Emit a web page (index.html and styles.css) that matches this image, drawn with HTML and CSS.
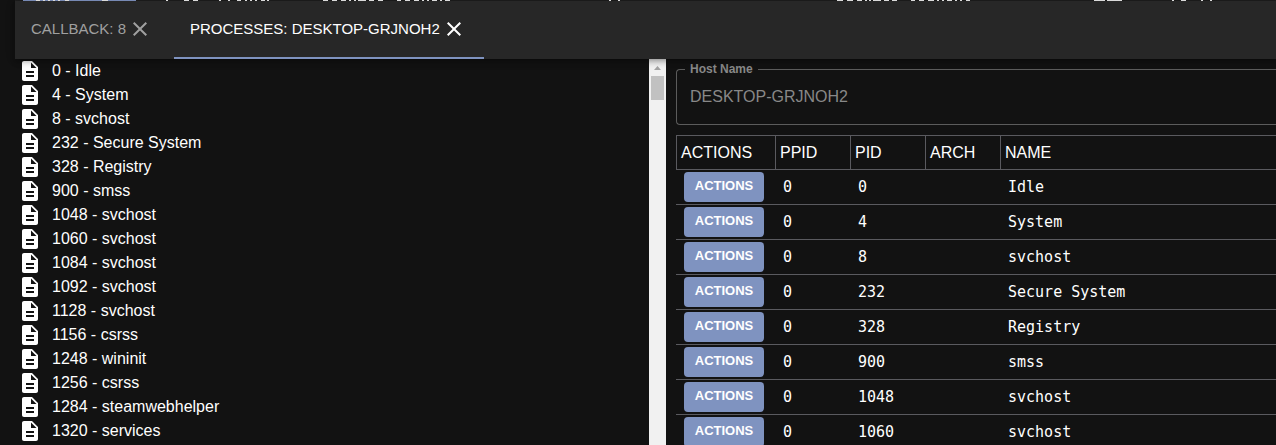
FILE: index.html
```html
<!DOCTYPE html>
<html lang="en">
<head>
<meta charset="utf-8">
<title>Processes: DESKTOP-GRJNOH2</title>
<meta name="viewport" content="width=device-width, initial-scale=1">
<link rel="stylesheet" href="styles.css">
</head>
<body>
<svg class="sprite" aria-hidden="true">
  <symbol id="i-file" viewBox="0 0 24 24"><path d="M14 2H6c-1.1 0-1.99.9-1.99 2L4 20c0 1.1.89 2 1.99 2H18c1.1 0 2-.9 2-2V8l-6-6zm2 16H8v-2h8v2zm0-4H8v-2h8v2zm-3-5V3.5L18.5 9H13z"/></symbol>
  <symbol id="i-close" viewBox="0 0 24 24"><path d="M19 6.41 17.59 5 12 10.59 6.41 5 5 6.41 10.59 12 5 17.59 6.41 19 12 13.41 17.59 19 19 17.59 13.41 12z"/></symbol>
</svg>
<div class="app">
  <div class="upper" aria-hidden="true">
    <svg class="upper-edge" width="1261" height="1" shape-rendering="crispEdges">
      <path stroke="#7f93c0" d="M8 .5h113"/>
      <path stroke="#e8e8e8" d="M21 .5h4m3 0h2m3 0h2m3 0h2m3 0h2m5 0h4m33 0h6m58 0h2m16 0h5m4 0h5m21 0h2m7 0h2m7 0h4m4 0h2m3 0h2m3 0h2m4 0h4m2 0h2M308 .5h5m4 0h5m4 0h5m3 0h2m3 0h2m2 0h8m3 0h5m4 0h5m14 0h4m4 0h5m4 0h5m3 0h2m3 0h2m3 0h5m3 0h2m3 0h5M594 .5h2m7 0h2M822 .5h6m4 0h6m4 0h5m3 0h2m2 0h2m2 0h8m3 0h5m3 0h5m14 0h4m4 0h5m4 0h6m3 0h2m3 0h2m3 0h5m3 0h2m3 0h2m4 0h4M1079 .5h11m2 0h15m50 0h2m7 0h5m15 0h2m7 0h2"/>
    </svg>
  </div>
  <header class="tabs" role="tablist">
    <div class="tab">
      <button class="tab-label" type="button" role="tab" aria-selected="false">CALLBACK: 8</button>
      <button class="tab-close" type="button" aria-label="Close callback 8"><svg class="icon"><use href="#i-close"/></svg></button>
    </div>
    <div class="tab tab-active">
      <button class="tab-label" type="button" role="tab" aria-selected="true">PROCESSES: DESKTOP-GRJNOH2</button>
      <button class="tab-close" type="button" aria-label="Close processes"><svg class="icon"><use href="#i-close"/></svg></button>
    </div>
  </header>
  <main class="panes">
    <section class="tree">
      <ul class="tree-list">
        <li class="node"><svg class="icon"><use href="#i-file"/></svg>0 - Idle</li>
        <li class="node"><svg class="icon"><use href="#i-file"/></svg>4 - System</li>
        <li class="node"><svg class="icon"><use href="#i-file"/></svg>8 - svchost</li>
        <li class="node"><svg class="icon"><use href="#i-file"/></svg>232 - Secure System</li>
        <li class="node"><svg class="icon"><use href="#i-file"/></svg>328 - Registry</li>
        <li class="node"><svg class="icon"><use href="#i-file"/></svg>900 - smss</li>
        <li class="node"><svg class="icon"><use href="#i-file"/></svg>1048 - svchost</li>
        <li class="node"><svg class="icon"><use href="#i-file"/></svg>1060 - svchost</li>
        <li class="node"><svg class="icon"><use href="#i-file"/></svg>1084 - svchost</li>
        <li class="node"><svg class="icon"><use href="#i-file"/></svg>1092 - svchost</li>
        <li class="node"><svg class="icon"><use href="#i-file"/></svg>1128 - svchost</li>
        <li class="node"><svg class="icon"><use href="#i-file"/></svg>1156 - csrss</li>
        <li class="node"><svg class="icon"><use href="#i-file"/></svg>1248 - wininit</li>
        <li class="node"><svg class="icon"><use href="#i-file"/></svg>1256 - csrss</li>
        <li class="node"><svg class="icon"><use href="#i-file"/></svg>1284 - steamwebhelper</li>
        <li class="node"><svg class="icon"><use href="#i-file"/></svg>1320 - services</li>
      </ul>
      <div class="scrollbar" aria-hidden="true">
        <svg class="scroll-up" viewBox="0 0 17 17"><path d="M5 11h7L8.500 7z"/></svg>
        <div class="scroll-thumb"></div>
      </div>
    </section>
    <section class="details">
      <fieldset class="field">
        <legend class="field-legend"><label for="host">Host Name</label></legend>
        <input class="field-input" id="host" type="text" value="DESKTOP-GRJNOH2" disabled>
      </fieldset>
      <table class="grid">
        <colgroup><col class="col-actions"><col class="col-id"><col class="col-id"><col class="col-id"><col></colgroup>
        <thead><tr><th>ACTIONS</th><th>PPID</th><th>PID</th><th>ARCH</th><th>NAME</th></tr></thead>
        <tbody>
          <tr><td><button class="action" type="button">ACTIONS</button></td><td>0</td><td>0</td><td></td><td>Idle</td></tr>
          <tr><td><button class="action" type="button">ACTIONS</button></td><td>0</td><td>4</td><td></td><td>System</td></tr>
          <tr><td><button class="action" type="button">ACTIONS</button></td><td>0</td><td>8</td><td></td><td>svchost</td></tr>
          <tr><td><button class="action" type="button">ACTIONS</button></td><td>0</td><td>232</td><td></td><td>Secure System</td></tr>
          <tr><td><button class="action" type="button">ACTIONS</button></td><td>0</td><td>328</td><td></td><td>Registry</td></tr>
          <tr><td><button class="action" type="button">ACTIONS</button></td><td>0</td><td>900</td><td></td><td>smss</td></tr>
          <tr><td><button class="action" type="button">ACTIONS</button></td><td>0</td><td>1048</td><td></td><td>svchost</td></tr>
          <tr><td><button class="action" type="button">ACTIONS</button></td><td>0</td><td>1060</td><td></td><td>svchost</td></tr>
        </tbody>
      </table>
    </section>
  </main>
</div>
</body>
</html>
```

FILE: styles.css
```css
* { box-sizing: border-box; }

body {
  margin: 0;
  background: #121212;
  color: #fff;
  font: 16px/24px "Liberation Sans", Arial, sans-serif;
}

button, input { font-family: inherit; }

.sprite { display: none; }

.icon {
  display: block;
  flex: none;
  width: 24px;
  height: 24px;
  fill: currentColor;
}

.app {
  display: flex;
  flex-direction: column;
  height: 100vh;
  padding-left: 15px;
  overflow: hidden;
}

.upper {
  flex: none;
  height: 1px;
  overflow: hidden;
  background: #1e1e1e;
}

.upper-edge { display: block; }

.tabs {
  display: flex;
  flex: none;
  height: 58px;
  background: #272727;
  box-shadow: 0 2px 4px -1px rgba(0, 0, 0, .2), 0 4px 5px rgba(0, 0, 0, .14), 0 1px 10px rgba(0, 0, 0, .12);
  z-index: 1;
}

.tab {
  display: flex;
  align-items: center;
  min-width: 159px;
  padding: 0 16px;
  border-bottom: 2px solid transparent;
  color: #a0a0a0;
}

.tab-active {
  border-color: #7f93c0;
  color: #fff;
}

.tab-label {
  padding: 0;
  border: 0;
  background: none;
  color: inherit;
  font-size: 15px;
  line-height: 20px;
  white-space: nowrap;
}

.tab-close {
  padding: 2px;
  border: 0;
  background: none;
  color: inherit;
}

.panes {
  display: grid;
  flex: 1;
  grid-template-columns: minmax(0, 651fr) minmax(0, 610fr);
  min-height: 0;
}

.tree {
  display: flex;
  min-width: 0;
  overflow: hidden;
}

.tree-list {
  flex: 1;
  margin: 0;
  padding: 0 0 0 3px;
  list-style: none;
}

.node {
  display: flex;
  gap: 10px;
  height: 24px;
}

.scrollbar {
  flex: none;
  width: 17px;
  background: #f1f1f1;
}

.scroll-up {
  display: block;
  height: 17px;
  fill: #a3a3a3;
}

.scroll-thumb {
  height: 24px;
  margin: 0 2px;
  background: #c1c1c1;
}

.details {
  min-width: 0;
  padding: 3px 0 0 10px;
  overflow: hidden;
}

.field {
  min-width: 0;
  margin: 0 0 10px;
  padding: 0 8px;
  border: 1px solid #5c5c5c;
  border-right: 0;
  border-radius: 4px 0 0 4px;
}

.field-legend {
  padding: 0 5px;
  color: #888;
  font-size: 12px;
  font-weight: 700;
  line-height: 14px;
}

.field-legend label { display: block; }

.field-input {
  display: block;
  width: 100%;
  height: 48px;
  padding: 0 5px 7px;
  border: 0;
  background: none;
  color: #888;
  font-size: 16px;
}

.grid {
  width: 100%;
  border-spacing: 0;
  table-layout: fixed;
}

.col-actions { width: 99px; }
.col-id { width: 75px; }

.grid th {
  height: 35px;
  padding: 0 4px;
  border: solid #5a5a5f;
  border-width: 1px 0 1px 1px;
  font-weight: 400;
  text-align: left;
}

.grid td {
  height: 35px;
  padding: 0 8px;
  border-bottom: 1px solid #5a5a5f;
  font: 15px/20px "DejaVu Sans Mono", monospace;
}

.action {
  display: block;
  width: 80px;
  height: 30px;
  padding: 0 0 2px;
  border: 0;
  border-radius: 4px;
  background: #7f93c0;
  color: #fff;
  font: 700 13px/24px "Liberation Sans", Arial, sans-serif;
}
```
